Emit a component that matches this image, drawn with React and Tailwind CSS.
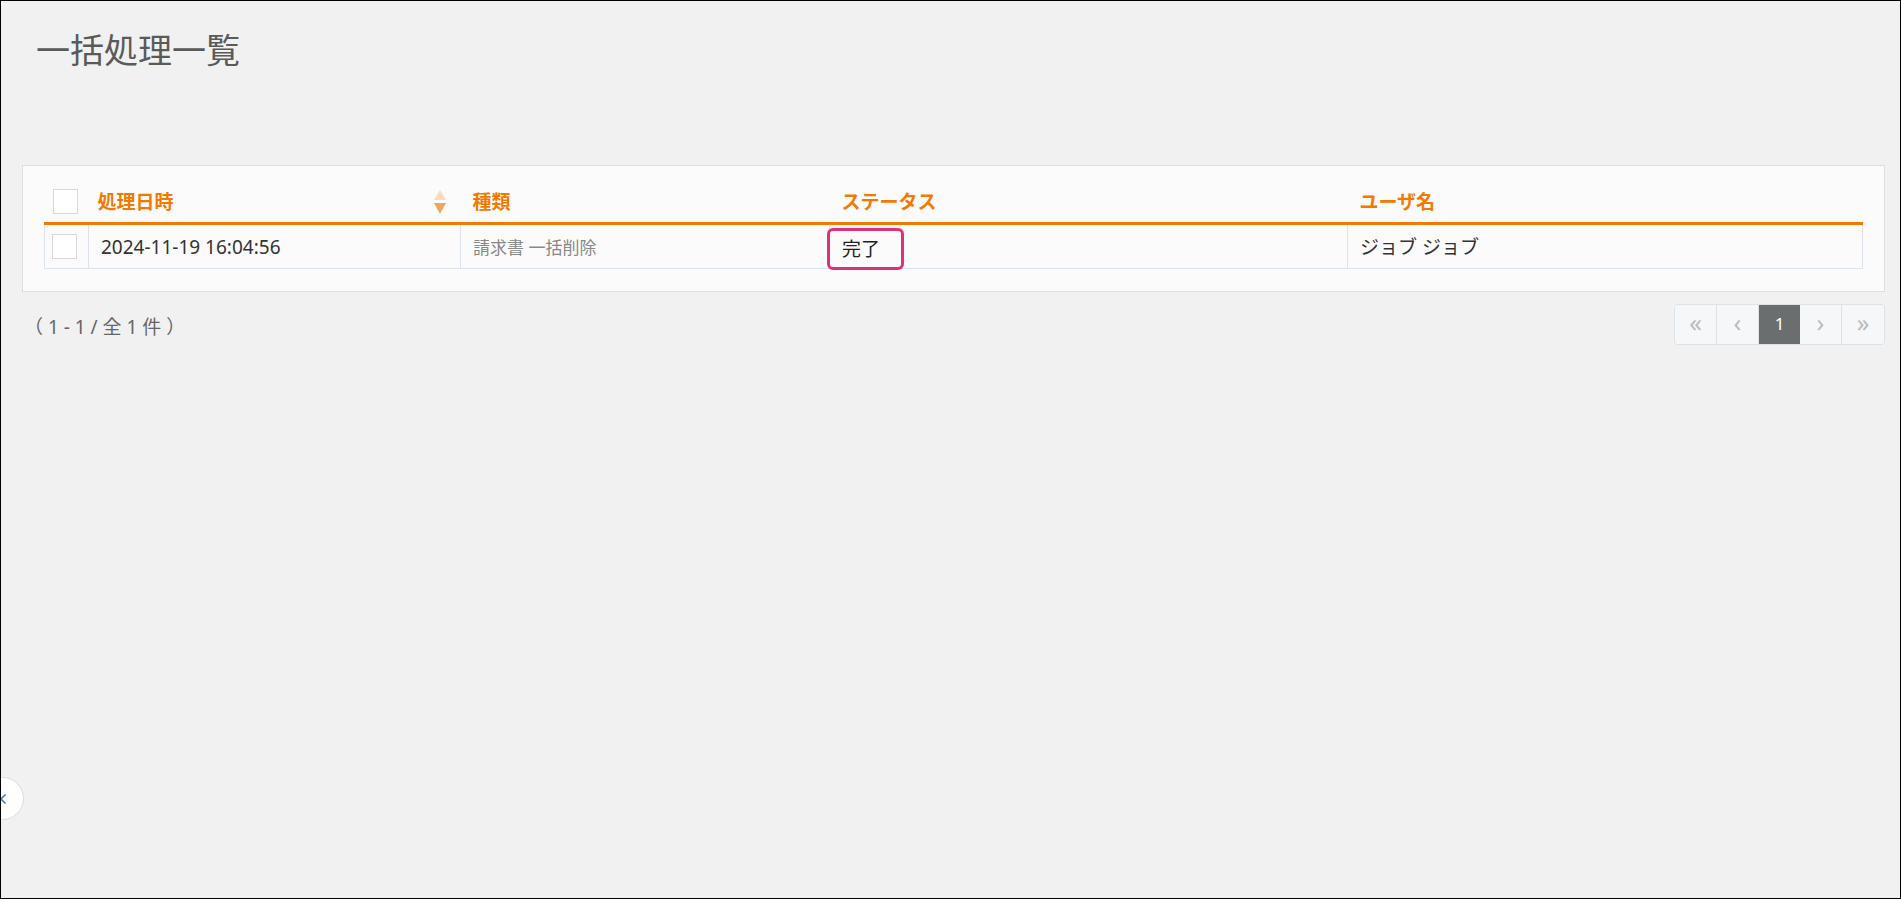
import React from "react";
import { ChevronLeft } from "lucide-react";

const rows = [
  {
    id: 1,
    date: "2024-11-19 16:04:56",
    type: "請求書 一括削除",
    status: "完了",
    user: "ジョブ ジョブ",
  },
];

const SortIcon = () => (
  <svg width="14" height="24" viewBox="0 0 14 24" className="block">
    <polygon points="7,0 13,10 1,10" fill="#fadcbc" />
    <polygon points="1,13 13,13 7,24" fill="#eea664" />
  </svg>
);

const Checkbox = () => (
  <div className="w-[25px] h-[25px] border border-[#d8d8d8] bg-white" />
);

const PageButton = ({ children, active, last }) => (
  <div
    className={
      active
        ? "w-[41px] h-full flex items-center justify-center bg-[#6b6e6f] text-white text-[17px]"
        : "w-[42px] h-full flex items-center justify-center bg-[#f5f7f9] text-[#b9bcbf] text-[25px] leading-none pb-[3px] " +
          (last ? "" : "border-r border-[#dde2e6]")
    }
  >
    {children}
  </div>
);

export default function App() {
  return (
    <div className="relative w-[1901px] h-[899px] overflow-hidden border border-black bg-[#f1f1f1] font-['Noto_Sans','Noto_Sans_CJK_JP',sans-serif]">
      <h1 className="pl-[35px] pt-[27px] text-[34px] leading-[44px] font-normal text-[#5a5a5a]">
        一括処理一覧
      </h1>

      {/* List panel */}
      <div className="mt-[93px] ml-[21px] mr-[15px] border border-[#dedede] bg-[#fbfbfb] px-[21px] pt-[16px] pb-[22px]">
        <table className="w-full border-collapse">
          <thead>
            <tr className="h-[41px] border-b-[3px] border-[#f27a00] text-[#f27a00] text-[19px] font-bold text-left">
              <th className="w-[44px] pl-[8px] align-middle">
                <Checkbox />
              </th>
              <th className="w-[372px] pl-[9px] pr-[14px]">
                <div className="flex items-center justify-between">
                  <span>処理日時</span>
                  <SortIcon />
                </div>
              </th>
              <th className="w-[369px] pl-3">種類</th>
              <th className="w-[518px] pl-3">ステータス</th>
              <th className="pl-3">ユーザ名</th>
            </tr>
          </thead>
          <tbody>
            {rows.map((row) => (
              <tr key={row.id} className="h-[45px]">
                <td className="border border-[#dde3ea] pl-[7px]">
                  <Checkbox />
                </td>
                <td className="border border-[#dde3ea] pl-3 pt-[3px] text-[19px] text-[#333]">
                  {row.date}
                </td>
                <td className="border border-[#dde3ea] pl-3 pt-[3px] text-[17px] text-[#888]">
                  {row.type}
                </td>
                <td className="border border-[#dde3ea] pl-3 text-[19px] text-[#222]">
                  <span className="relative top-[3px] -ml-[15px] inline-block rounded-[6px] border-[3px] border-[#e0307a] pl-[12px] pr-[21px] py-[3px] leading-[30px]">
                    {row.status}
                  </span>
                </td>
                <td className="border border-[#dde3ea] pl-3 pt-[3px] text-[19px] text-[#333]">
                  {row.user}
                </td>
              </tr>
            ))}
          </tbody>
        </table>
      </div>

      {/* Footer: count + pagination */}
      <div className="mt-[12px] ml-[21px] mr-[15px] flex items-center justify-between">
        <div className="pl-[2px] pt-[6px] text-[19px] text-[#666] whitespace-pre">
          （ 1 - 1 / 全 1 件 ）
        </div>
        <div className="flex h-[41px] overflow-hidden rounded-[4px] border border-[#dde2e6]">
          <PageButton>«</PageButton>
          <PageButton>‹</PageButton>
          <PageButton active>1</PageButton>
          <PageButton>›</PageButton>
          <PageButton last>»</PageButton>
        </div>
      </div>

      {/* Side toggle */}
      <div className="absolute left-[-20px] top-[776px] flex h-[43px] w-[43px] items-center justify-start pl-[13px] rounded-full border border-[#dcdcdc] bg-white">
        <ChevronLeft className="h-[16px] w-[16px] text-[#3f7ccc]" strokeWidth={2.5} />
      </div>
    </div>
  );
}
